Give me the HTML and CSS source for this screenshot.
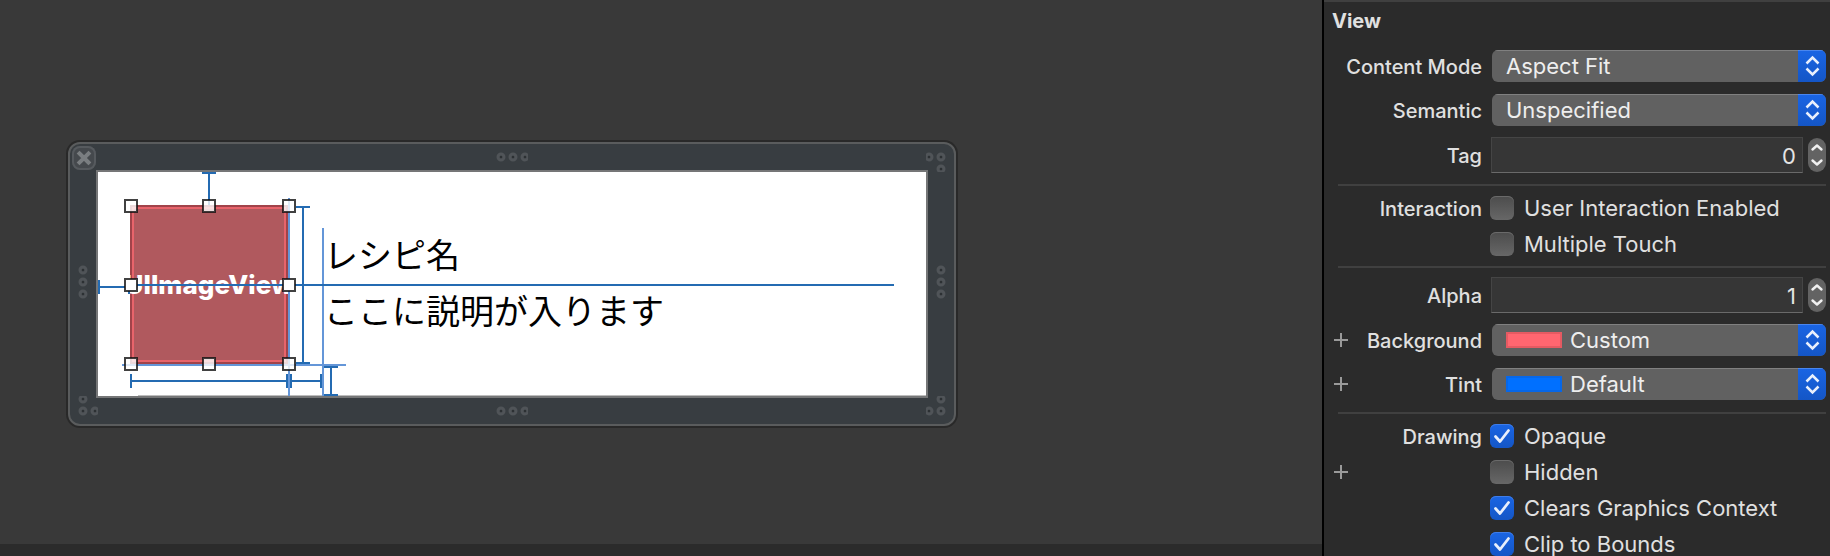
FILE: index.html
```html
<!DOCTYPE html>
<html lang="ja">
<head>
<meta charset="utf-8">
<meta name="viewport" content="width=device-width, initial-scale=1">
<title>Interface Builder</title>
<link rel="stylesheet" href="styles.css">
</head>
<body>
<svg class="defs" aria-hidden="true">
  <symbol id="updown" viewBox="0 0 28 32"><path d="M8.500 13.500L14.500 7.500L20.500 13.500M8.500 18.500L14.500 24.500L20.500 18.500" fill="none" stroke="currentColor" stroke-width="2.500"/></symbol>
  <symbol id="plus" viewBox="0 0 14 14"><path d="M7 0V14M0 7H14" fill="none" stroke="currentColor" stroke-width="2"/></symbol>
  <symbol id="check" viewBox="0 0 24 24"><path d="M5.500 12.500L10 17.500L18.500 6.500" fill="none" stroke="currentColor" stroke-width="2.800" stroke-linecap="round" stroke-linejoin="round"/></symbol>
  <symbol id="up" viewBox="0 0 18 17"><path d="M4.500 11.500L9 7.500L13.500 11.500" fill="none" stroke="currentColor" stroke-width="2.400" stroke-linecap="round" stroke-linejoin="round"/></symbol>
  <symbol id="down" viewBox="0 0 18 17"><path d="M4.500 5.500L9 9.500L13.500 5.500" fill="none" stroke="currentColor" stroke-width="2.400" stroke-linecap="round" stroke-linejoin="round"/></symbol>
  <symbol id="ring" viewBox="0 0 10 10"><circle cx="5" cy="5" r="3" fill="none" stroke="#505458" stroke-width="3"/><rect x="4" y="4" width="2" height="2" fill="#2c3033"/></symbol>
</svg>

<main class="canvas">
  <div class="stage">
    <section class="frame" aria-label="Cell">
      <button class="close" type="button" aria-label="Close"><svg viewBox="0 0 24 24"><path d="M7.500 7.500L16.500 16.500M16.500 7.500L7.500 16.500" stroke="#7a7e81" stroke-width="4" stroke-linecap="square"/></svg></button>
      <svg class="dots-row" viewBox="0 0 32 10"><use href="#ring" width="10" height="10"/><use href="#ring" x="12" width="10" height="10"/><use href="#ring" x="24" width="10" height="10"/></svg>
      <svg class="corner corner-top" viewBox="0 0 28 28"><use href="#ring" x="-2" y="8" width="10" height="10"/><use href="#ring" x="10" y="8" width="10" height="10"/><use href="#ring" x="10" y="20" width="10" height="10"/></svg>
      <svg class="dots-col" viewBox="0 0 10 38"><use href="#ring" width="10" height="10"/><use href="#ring" y="12" width="10" height="10"/><use href="#ring" y="24" width="10" height="10"/></svg>
      <div class="screen">
        <div class="image-view"><span>UIImageView</span></div>
        <div class="recipe">
          <p>レシピ名</p>
          <p>ここに説明が入ります</p>
        </div>
        <svg class="constraints" viewBox="0 0 828 224" preserveAspectRatio="xMinYMin">
          <path d="M40 223.500H828" stroke="#bdbdbd"/>
          <g fill="none" stroke="#6496d8" stroke-width="2">
            <path d="M225 56V224M24 193H248"/>
          </g>
          <g fill="none" stroke="#246bb2" stroke-width="2">
            <path d="M104 1H118M111 0V33"/>
            <path d="M1 108V122M0 115H32M31 108V122"/>
            <path d="M32 113H796"/>
            <path d="M198 35H212M205 34V192M198 191H212"/>
            <path d="M33 202V216M32 209H222M189 202V216M193 202V216M223 202V216"/>
            <path d="M226 195H240M233 194V224M226 223H240"/>
          </g>
          <path d="M191 26V224" stroke="#6496d8" stroke-width="2"/>
          <g fill="#ffffff" fill-opacity=".8" stroke="#111111" stroke-opacity=".8" stroke-width="2">
            <rect x="27" y="28" width="12" height="12"/><rect x="105" y="28" width="12" height="12"/><rect x="185" y="28" width="12" height="12"/>
            <rect x="27" y="107" width="12" height="12" fill-opacity="1"/><rect x="185" y="107" width="12" height="12" fill-opacity="1"/>
            <rect x="27" y="186" width="12" height="12"/><rect x="105" y="186" width="12" height="12"/><rect x="185" y="186" width="12" height="12"/>
          </g>
        </svg>
      </div>
      <svg class="dots-col" viewBox="0 0 10 38"><use href="#ring" width="10" height="10"/><use href="#ring" y="12" width="10" height="10"/><use href="#ring" y="24" width="10" height="10"/></svg>
      <svg class="corner corner-left" viewBox="0 0 28 28"><use href="#ring" x="8" y="-2" width="10" height="10"/><use href="#ring" x="8" y="10" width="10" height="10"/><use href="#ring" x="20" y="10" width="10" height="10"/></svg>
      <svg class="dots-row" viewBox="0 0 32 10"><use href="#ring" width="10" height="10"/><use href="#ring" x="12" width="10" height="10"/><use href="#ring" x="24" width="10" height="10"/></svg>
      <svg class="corner" viewBox="0 0 28 28"><use href="#ring" x="10" y="-2" width="10" height="10"/><use href="#ring" x="10" y="10" width="10" height="10"/><use href="#ring" x="-2" y="10" width="10" height="10"/></svg>
    </section>
  </div>
  <div class="bottom-bar"></div>
</main>

<aside class="inspector">
  <h2 class="title">View</h2>
  <section class="fields">
    <div class="row">
      <label class="name" for="mode">Content Mode</label>
      <div class="popup"><select id="mode"><option>Aspect Fit</option></select><svg class="cap"><use href="#updown"/></svg></div>
    </div>
    <div class="row">
      <label class="name" for="semantic">Semantic</label>
      <div class="popup"><select id="semantic"><option>Unspecified</option></select><svg class="cap"><use href="#updown"/></svg></div>
    </div>
    <div class="row row-number">
      <label class="name" for="tag">Tag</label>
      <div class="number"><input id="tag" type="text" value="0"><div class="stepper"><button type="button" aria-label="Increase tag"><svg><use href="#up"/></svg></button><button type="button" aria-label="Decrease tag"><svg><use href="#down"/></svg></button></div></div>
    </div>
  </section>
  <hr>
  <section class="checks">
    <div class="row row-check">
      <span class="name">Interaction</span>
      <label class="check"><input type="checkbox">User Interaction Enabled</label>
    </div>
    <div class="row row-check">
      <label class="check"><input type="checkbox">Multiple Touch</label>
    </div>
  </section>
  <hr>
  <section class="fields">
    <div class="row row-number">
      <label class="name" for="alpha">Alpha</label>
      <div class="number"><input id="alpha" type="text" value="1"><div class="stepper"><button type="button" aria-label="Increase alpha"><svg><use href="#up"/></svg></button><button type="button" aria-label="Decrease alpha"><svg><use href="#down"/></svg></button></div></div>
    </div>
    <div class="row">
      <button class="add" type="button" aria-label="Add background variation"><svg><use href="#plus"/></svg></button>
      <label class="name" for="background">Background</label>
      <div class="popup popup-color"><select id="background"><option>Custom</option></select><span class="swatch swatch-red"></span><svg class="cap"><use href="#updown"/></svg></div>
    </div>
    <div class="row">
      <button class="add" type="button" aria-label="Add tint variation"><svg><use href="#plus"/></svg></button>
      <label class="name" for="tint">Tint</label>
      <div class="popup popup-color"><select id="tint"><option>Default</option></select><span class="swatch swatch-blue"></span><svg class="cap"><use href="#updown"/></svg></div>
    </div>
  </section>
  <hr>
  <section class="checks">
    <div class="row row-check">
      <span class="name">Drawing</span>
      <label class="check"><input type="checkbox" checked><svg class="tick"><use href="#check"/></svg>Opaque</label>
    </div>
    <div class="row row-check">
      <button class="add" type="button" aria-label="Add hidden variation"><svg><use href="#plus"/></svg></button>
      <label class="check"><input type="checkbox">Hidden</label>
    </div>
    <div class="row row-check">
      <label class="check"><input type="checkbox" checked><svg class="tick"><use href="#check"/></svg>Clears Graphics Context</label>
    </div>
    <div class="row row-check">
      <label class="check"><input type="checkbox" checked><svg class="tick"><use href="#check"/></svg>Clip to Bounds</label>
    </div>
  </section>
</aside>
</body>
</html>
```

FILE: styles.css
```css
* { box-sizing: border-box; }

body {
  display: flex;
  height: 100vh;
  margin: 0;
  overflow: hidden;
  background: #2b2b2b;
  color: #e0e0e0;
  font-family: Inter, "Noto Sans CJK JP", sans-serif;
  font-size: 20px;
}

button {
  display: block;
  padding: 0;
  border: 0;
  background: none;
  color: inherit;
}

svg { display: block; }
.defs { position: absolute; width: 0; height: 0; }

/* Canvas */
.canvas {
  display: flex;
  flex: 1;
  flex-direction: column;
  min-width: 0;
  background: #393939;
}

.stage {
  flex: 1;
  padding: 142px 0 0 68px;
  overflow: hidden;
}

.bottom-bar { height: 12px; background: #2b2b2b; }

.frame {
  display: grid;
  grid-template-columns: 26px 1fr 26px;
  grid-template-rows: 26px auto 26px;
  align-items: center;
  justify-items: center;
  width: 888px;
  border: 2px solid #5a5c5d;
  border-radius: 12px;
  background: #383d41;
  box-shadow: 0 0 0 2px #292929;
}

.close {
  place-self: end;
  width: 24px;
  height: 24px;
  border-radius: 8px;
  background: #45494d;
  box-shadow: inset 0 0 0 2px #565a5e;
}

.dots-row { width: 32px; height: 10px; }
.dots-col { width: 10px; height: 38px; }
.corner { place-self: end; width: 28px; height: 28px; }
.corner-top { align-self: start; }
.corner-left { justify-self: start; }

.screen {
  position: relative;
  align-self: stretch;
  justify-self: stretch;
  padding: 60px 0 64px 226px;
  border: 2px solid #757677;
  background: #ffffff;
  color: #000000;
}

.constraints {
  position: absolute;
  inset: 0;
  width: 100%;
  height: 100%;
}

.image-view {
  position: absolute;
  top: 33px;
  left: 32px;
  display: flex;
  align-items: center;
  justify-content: center;
  width: 158px;
  height: 159px;
  overflow: hidden;
  background: #b0595e;
  box-shadow: inset 0 0 0 2px #a1434a, inset 0 0 0 4px #e8646b;
  color: #ffffff;
  font-size: 26px;
  font-weight: 800;
}

.recipe { display: grid; gap: 12px; }

.recipe p {
  height: 44px;
  margin: 0;
  font-family: "Noto Sans CJK JP", sans-serif;
  font-size: 34px;
  line-height: 44px;
}

/* Inspector */
.inspector {
  flex: 0 0 508px;
  padding: 0 4px 0 8px;
  overflow: hidden;
  border-left: 2px solid #000000;
  box-shadow: inset 0 2px #404040;
}

.title {
  height: 44px;
  margin: 0;
  padding-top: 8px;
  font-size: 20px;
  font-weight: 700;
  line-height: 26px;
}

.fields { padding-bottom: 6px; }
hr + .fields { padding-top: 4px; }
.checks { padding: 4px 0; }

hr {
  height: 2px;
  margin: 0 0 0 6px;
  border: 0;
  background: #404040;
}

.row {
  display: grid;
  grid-template-columns: 20px 130px 1fr;
  align-items: center;
  height: 44px;
}

.row-number { height: 46px; }
.row-check { height: 36px; }

.add { grid-area: 1 / 1; width: 18px; height: 14px; color: #9a9a9a; }
.add svg { width: 18px; height: 14px; }

.name {
  grid-area: 1 / 2;
  justify-self: end;
  padding-top: 2px;
  font-weight: 500;
  white-space: nowrap;
}

.popup, .number, .check { grid-area: 1 / 3; }

.popup {
  position: relative;
  height: 32px;
  margin-left: 10px;
  overflow: hidden;
  border-radius: 6px;
}

.popup select {
  width: 100%;
  height: 32px;
  padding: 0 40px 0 14px;
  border: 0;
  background: #616161;
  box-shadow: inset 0 1px #808080;
  color: #eeeeee;
  font: inherit;
  font-size: 22px;
  appearance: none;
}

.popup-color select { padding-left: 78px; }

.cap {
  position: absolute;
  top: 0;
  right: 0;
  width: 28px;
  height: 32px;
  background: linear-gradient(#1a65e4, #1456c6);
  box-shadow: inset 0 1px #4a86ee;
  color: #e8effc;
  pointer-events: none;
}

.swatch {
  position: absolute;
  top: 8px;
  left: 14px;
  width: 56px;
  height: 16px;
  border: 2px solid #e55a62;
  background: #ff6670;
  pointer-events: none;
}

.swatch-blue { border-color: #0767e8; background: #0070ff; }

.number {
  display: grid;
  grid-template-columns: 1fr 18px;
  gap: 5px;
  align-items: center;
  padding-left: 9px;
}

.number input {
  width: 100%;
  height: 36px;
  padding: 2px 6px 0;
  border: 1px solid #454545;
  border-bottom-color: #6a6a6a;
  background: #363636;
  color: #e4e4e4;
  font: inherit;
  font-size: 22px;
  text-align: right;
}

.stepper {
  height: 34px;
  overflow: hidden;
  border-radius: 9px;
  background: #636363;
  color: #f0f0f0;
}

.stepper svg { width: 18px; height: 17px; }

.check {
  position: relative;
  display: flex;
  align-items: center;
  gap: 10px;
  padding-left: 8px;
  font-size: 22px;
  white-space: nowrap;
}

.check input {
  width: 24px;
  height: 24px;
  margin: 0;
  border-radius: 6px;
  background: linear-gradient(#4c4c4c, #676767);
  box-shadow: inset 0 1px #6a6a6a;
  appearance: none;
}

.check input:checked {
  background: linear-gradient(#1a65e4, #1456c6);
  box-shadow: inset 0 1px #3f7de8;
}

.tick {
  position: absolute;
  left: 8px;
  width: 24px;
  height: 24px;
  color: #e8effc;
  pointer-events: none;
}
.check input:not(:checked) + .tick { display: none; }
```
